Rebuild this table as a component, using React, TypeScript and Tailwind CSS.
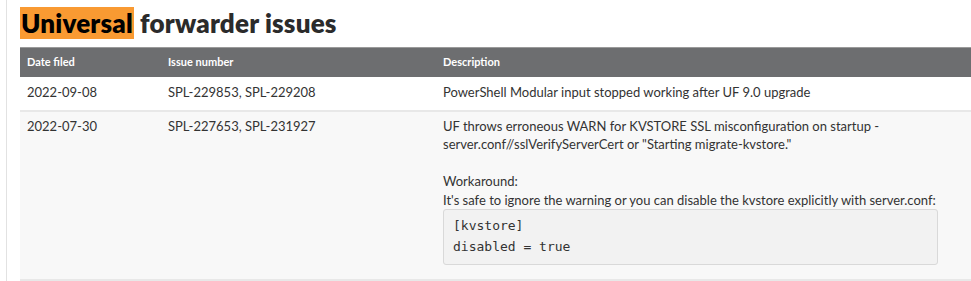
import React from "react";

export default function App() {
  const body = { fontFamily: '"Lato", "Open Sans", sans-serif' };
  return (
    <div className="w-[971px] h-[281px] overflow-hidden bg-white" style={body}>
      <div className="ml-[6px] border-l border-[#e2e2e2] h-full pl-[13px]">
        <h2 className="pt-[8px] text-[26px] leading-[30px] font-extrabold text-[#2b2b2b] tracking-[0.2px]">
          <span className="bg-[#f99a32] text-black pl-[1px] pr-[1px]">Universal</span> forwarder issues
        </h2>
        <table className="mt-[9px] w-[1000px] table-fixed border-collapse text-[13px] text-[#333]">
          <colgroup>
            <col className="w-[141px]" />
            <col className="w-[275px]" />
            <col />
          </colgroup>
          <thead>
            <tr className="bg-[#6d6e70] border-t border-[#9a9a9a] text-white text-left">
              <th className="h-[29px] px-[7px] text-[11px] font-bold">Date filed</th>
              <th className="px-[7px] text-[11px] font-bold">Issue number</th>
              <th className="px-[7px] text-[11px] font-bold">Description</th>
            </tr>
          </thead>
          <tbody>
            <tr className="border-b-[2px] border-[#e8e8e8] align-top">
              <td className="px-[7px] pt-[6px] pb-[9px] leading-[18px]">2022-09-08</td>
              <td className="px-[7px] pt-[6px] pb-[9px] leading-[18px]">SPL-229853, SPL-229208</td>
              <td className="px-[7px] pt-[6px] pb-[9px] leading-[18px]">PowerShell Modular input stopped working after UF 9.0 upgrade</td>
            </tr>
            <tr className="bg-[#f8f8f8] border-b-[2px] border-[#e8e8e8] align-top">
              <td className="px-[7px] pt-[5px] pb-[14px] leading-[18.5px]">2022-07-30</td>
              <td className="px-[7px] pt-[5px] pb-[14px] leading-[18.5px]">SPL-227653, SPL-231927</td>
              <td className="px-[7px] pt-[5px] pb-[14px] leading-[18.5px]">
                UF throws erroneous WARN for KVSTORE SSL misconfiguration on startup -
                <br />
                server.conf//sslVerifyServerCert or "Starting migrate-kvstore."
                <br />
                <br />
                Workaround:
                <br />
                It's safe to ignore the warning or you can disable the kvstore explicitly with server.conf:
                <pre
                  className="w-[495px] rounded-[3px] border border-[#d9d9d9] bg-[#f2f2f2] px-[9px] pt-[5px] pb-[7px] text-[13px] leading-[21px] text-[#333]"
                  style={{ fontFamily: '"DejaVu Sans Mono", monospace' }}
                >
{`[kvstore]
disabled = true`}
                </pre>
              </td>
            </tr>
          </tbody>
        </table>
      </div>
    </div>
  );
}
